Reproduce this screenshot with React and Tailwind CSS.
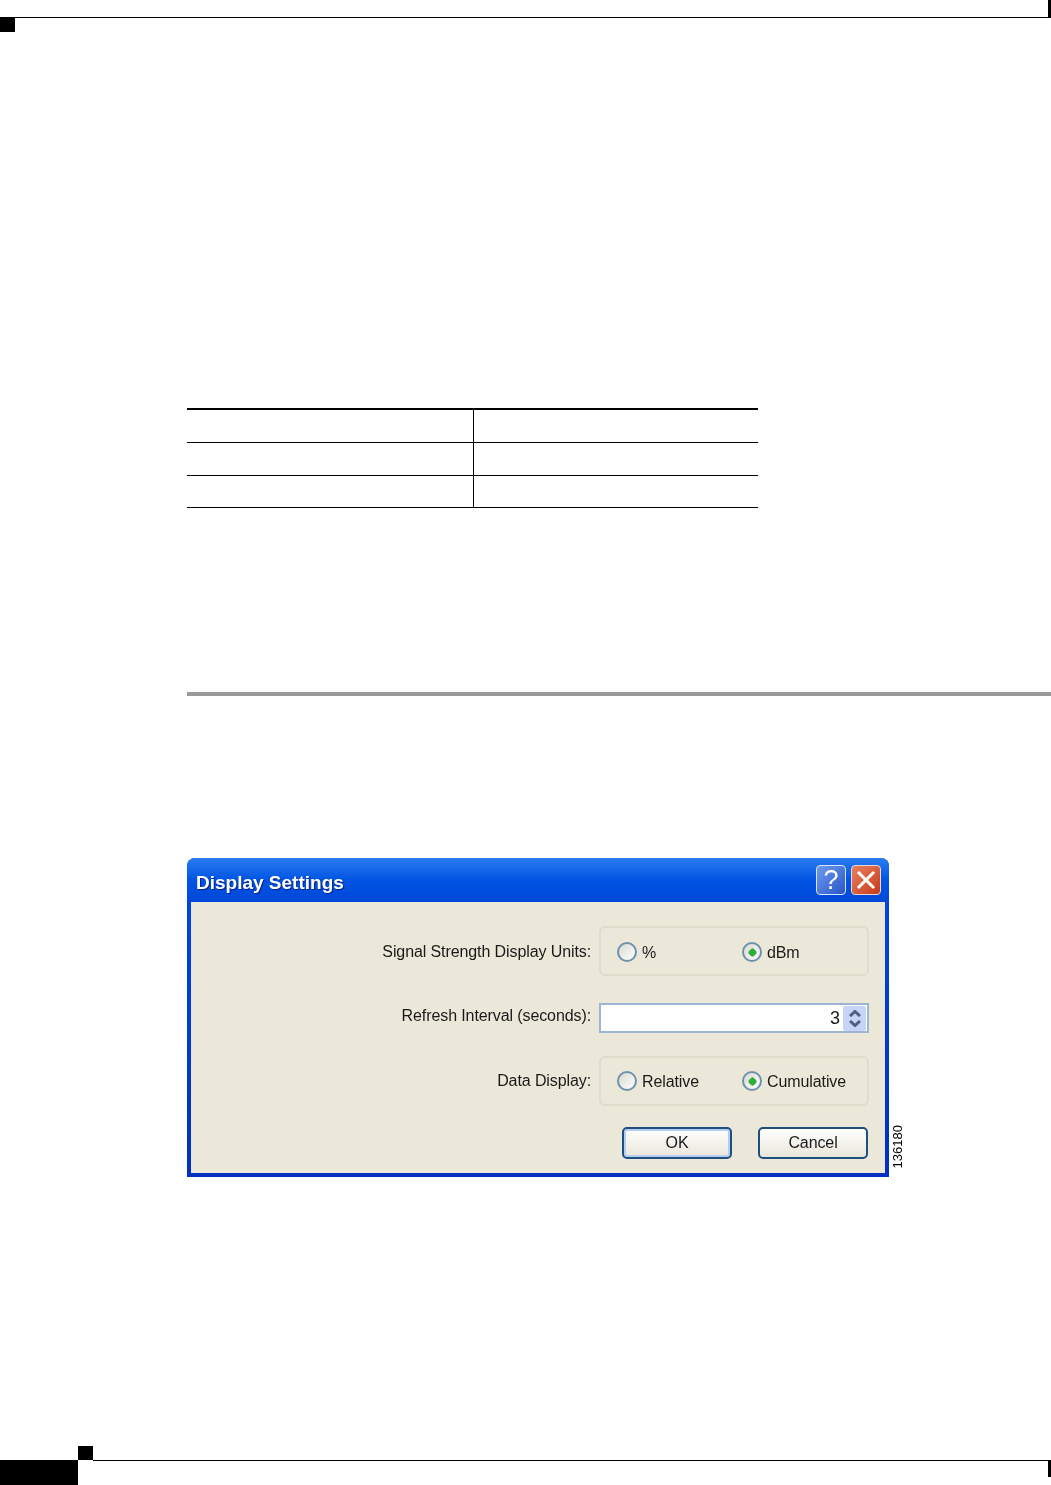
import React from "react";

function Radio({ checked }) {
  return (
    <span className="relative flex h-[20px] w-[20px] shrink-0 items-center justify-center rounded-full border-2 border-[#6f90ad] bg-gradient-to-br from-[#d9d9d2] to-[#ffffff]">
      {checked && <span className="h-[7px] w-[7px] rotate-45 rounded-[2px] bg-[#2fae3c]" />}
    </span>
  );
}

function Option({ label, checked, className }) {
  return (
    <div className={"flex items-center gap-[5px] " + className}>
      <Radio checked={checked} />
      <span className="pt-[1px]">{label}</span>
    </div>
  );
}

function Row({ label, labelClass, mt, h, children }) {
  return (
    <div className={"flex items-center " + mt + " " + h}>
      <div className={"w-[408px] pr-[8px] text-right " + labelClass}>{label}</div>
      <div className="w-[270px]">{children}</div>
    </div>
  );
}

function Group({ children, className }) {
  return (
    <div className={"flex h-[50px] items-center rounded-[6px] border-2 border-[#dfdccb] pl-[16px] " + className}>
      {children}
    </div>
  );
}

function Btn({ children, def, className }) {
  return (
    <div className={"flex h-[32px] w-[110px] items-center justify-center rounded-[5px] border-2 border-[#1f4f7f] bg-gradient-to-b from-[#ffffff] to-[#e8e6da] " + (def ? "shadow-[inset_0_0_0_2px_#b4cdf0] " : "") + className}>
      {children}
    </div>
  );
}

export default function App() {
  return (
    <div className="flex h-[1485px] w-[1051px] flex-col overflow-hidden bg-white font-['Liberation_Sans',sans-serif]">
      <header className="flex h-[32px] shrink-0 items-start">
        <div className="mt-[17px] h-[15px] w-[15px] bg-black" />
        <div className="h-[18px] flex-1 border-b border-black" />
        <div className="h-[18px] w-[3px] bg-black" />
      </header>

      <div className="ml-[187px] mt-[376px] flex h-[100px] w-[571px] flex-col border-t-2 border-black">
        <div className="grid h-[33px] grid-cols-[287px_1fr] border-b border-black"><div className="border-r border-black" /><div /></div>
        <div className="grid h-[33px] grid-cols-[287px_1fr] border-b border-black"><div className="border-r border-black" /><div /></div>
        <div className="grid h-[32px] grid-cols-[287px_1fr] border-b border-black"><div className="border-r border-black" /><div /></div>
      </div>

      <div className="ml-[187px] mt-[184px] h-[4px] bg-[#999999]" />

      <div className="ml-[187px] mt-[162px] flex items-end">
        <div className="h-[319px] w-[702px] rounded-t-[8px] bg-gradient-to-b from-[#0048e0] to-[#0030c0] px-[4px] pb-[4px] text-[16px] tracking-[-0.1px] text-[#1a1a1a] blur-[0.4px]">
          <div className="-mx-[4px] flex h-[44px] items-center rounded-t-[8px] bg-gradient-to-b from-[#2a7cf0] via-[#0054e3] to-[#0048d8] pl-[9px] pr-[8px]">
            <span className="flex-1 pt-[5px] text-[19px] font-bold leading-none tracking-normal text-white [text-shadow:1px_1px_1px_#0a1f7a]">Display Settings</span>
            <div className="flex h-[30px] w-[30px] items-center justify-center rounded-[4px] border border-[#d8e4f8] bg-gradient-to-br from-[#6f9bec] to-[#2a56c8] text-[27px] leading-none text-white">?</div>
            <div className="ml-[5px] flex h-[30px] w-[30px] items-center justify-center rounded-[4px] border border-[#e8d8d0] bg-gradient-to-br from-[#e88060] to-[#c83810]">
              <svg width="20" height="20" viewBox="0 0 20 20"><path d="M3 3 L17 17 M17 3 L3 17" stroke="#ffffff" strokeWidth="3" strokeLinecap="square" /></svg>
            </div>
          </div>
          <div className="h-[271px] bg-[#ebe8d9] pt-[24px]">
            <Row label="Signal Strength Display Units:" labelClass="pt-[2px]" mt="" h="h-[50px]">
              <Group className="pt-[2px]">
                <Option label="%" checked={false} className="w-[125px]" />
                <Option label="dBm" checked={true} />
              </Group>
            </Row>
            <Row label="Refresh Interval (seconds):" labelClass="pb-[5px]" mt="mt-[27px]" h="h-[30px]">
              <div className="flex h-[30px] items-center justify-end border-2 border-[#9db5d0] bg-white pr-[1px]">
                <span className="mr-[3px] text-[18px]">3</span>
                <div className="flex h-[25px] w-[23px] flex-col items-center justify-center gap-[3px] rounded-[2px] bg-[#c6d4f5]">
                  <svg width="12" height="7" viewBox="0 0 12 7"><path d="M1 6 L6 1.5 L11 6" fill="none" stroke="#4d6185" strokeWidth="3" /></svg>
                  <svg width="12" height="7" viewBox="0 0 12 7"><path d="M1 1 L6 5.5 L11 1" fill="none" stroke="#4d6185" strokeWidth="3" /></svg>
                </div>
              </div>
            </Row>
            <Row label="Data Display:" labelClass="" mt="mt-[23px]" h="h-[50px]">
              <Group className="">
                <Option label="Relative" checked={false} className="w-[125px]" />
                <Option label="Cumulative" checked={true} />
              </Group>
            </Row>
            <div className="mt-[21px] flex justify-end pr-[17px]">
              <Btn def className="mr-[26px]">OK</Btn>
              <Btn>Cancel</Btn>
            </div>
          </div>
        </div>
        <div className="mb-[9px] ml-[1px] rotate-180 text-[13px] leading-[16px] text-black [writing-mode:vertical-rl]">136180</div>
      </div>

      <footer className="mt-auto flex h-[39px] shrink-0 items-end">
        <div className="h-[25px] w-[78px] bg-black" />
        <div className="h-[39px] w-[15px]"><div className="h-[14px] bg-black" /></div>
        <div className="h-[25px] flex-1 border-t border-black" />
        <div className="mb-[8px] h-[17px] w-[3px] bg-black" />
      </footer>
    </div>
  );
}
